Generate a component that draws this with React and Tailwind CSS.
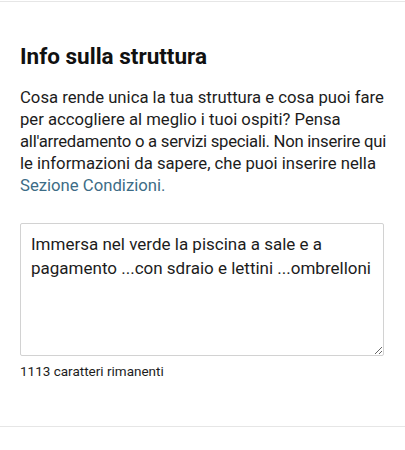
import React from 'react';

export default function App() {
  return (
    <div className="w-[405px] h-[450px] bg-white font-['Roboto',sans-serif] text-[#1c1c1c]">
      <div className="h-px bg-[#e6e6e6] mt-px" />
      <div className="px-5 pt-[39px]">
        <h1 className="text-[22.5px] leading-[30px] font-bold text-[#111]">Info sulla struttura</h1>
        <p className="mt-[16px] w-[380px] whitespace-nowrap text-[16.7px] leading-[22px]">
          Cosa rende unica la tua struttura e cosa puoi fare
          <br />
          per accogliere al meglio i tuoi ospiti? Pensa
          <br />
          <span className="tracking-[-0.25px]">all'arredamento o a servizi speciali. Non inserire qui</span>
          <br />
          le informazioni da sapere, che puoi inserire nella
          <br />
          <a className="text-[#3d6c86]">Sezione Condizioni.</a>
        </p>
        <textarea
          className="mt-[26px] block w-[364px] h-[133px] border border-[#d2d2d2] rounded-[2px] px-[10px] py-[8px] text-[17px] leading-[24px] text-[#1c1c1c] outline-none resize-y"
          defaultValue="Immersa nel verde la piscina a sale e a pagamento ...con sdraio e lettini ...ombrelloni"
        />
        <div className="mt-[6px] text-[13.5px] leading-[18px]">1113 caratteri rimanenti</div>
      </div>
      <div className="mt-[46px] h-px bg-[#e6e6e6]" />
    </div>
  );
}
